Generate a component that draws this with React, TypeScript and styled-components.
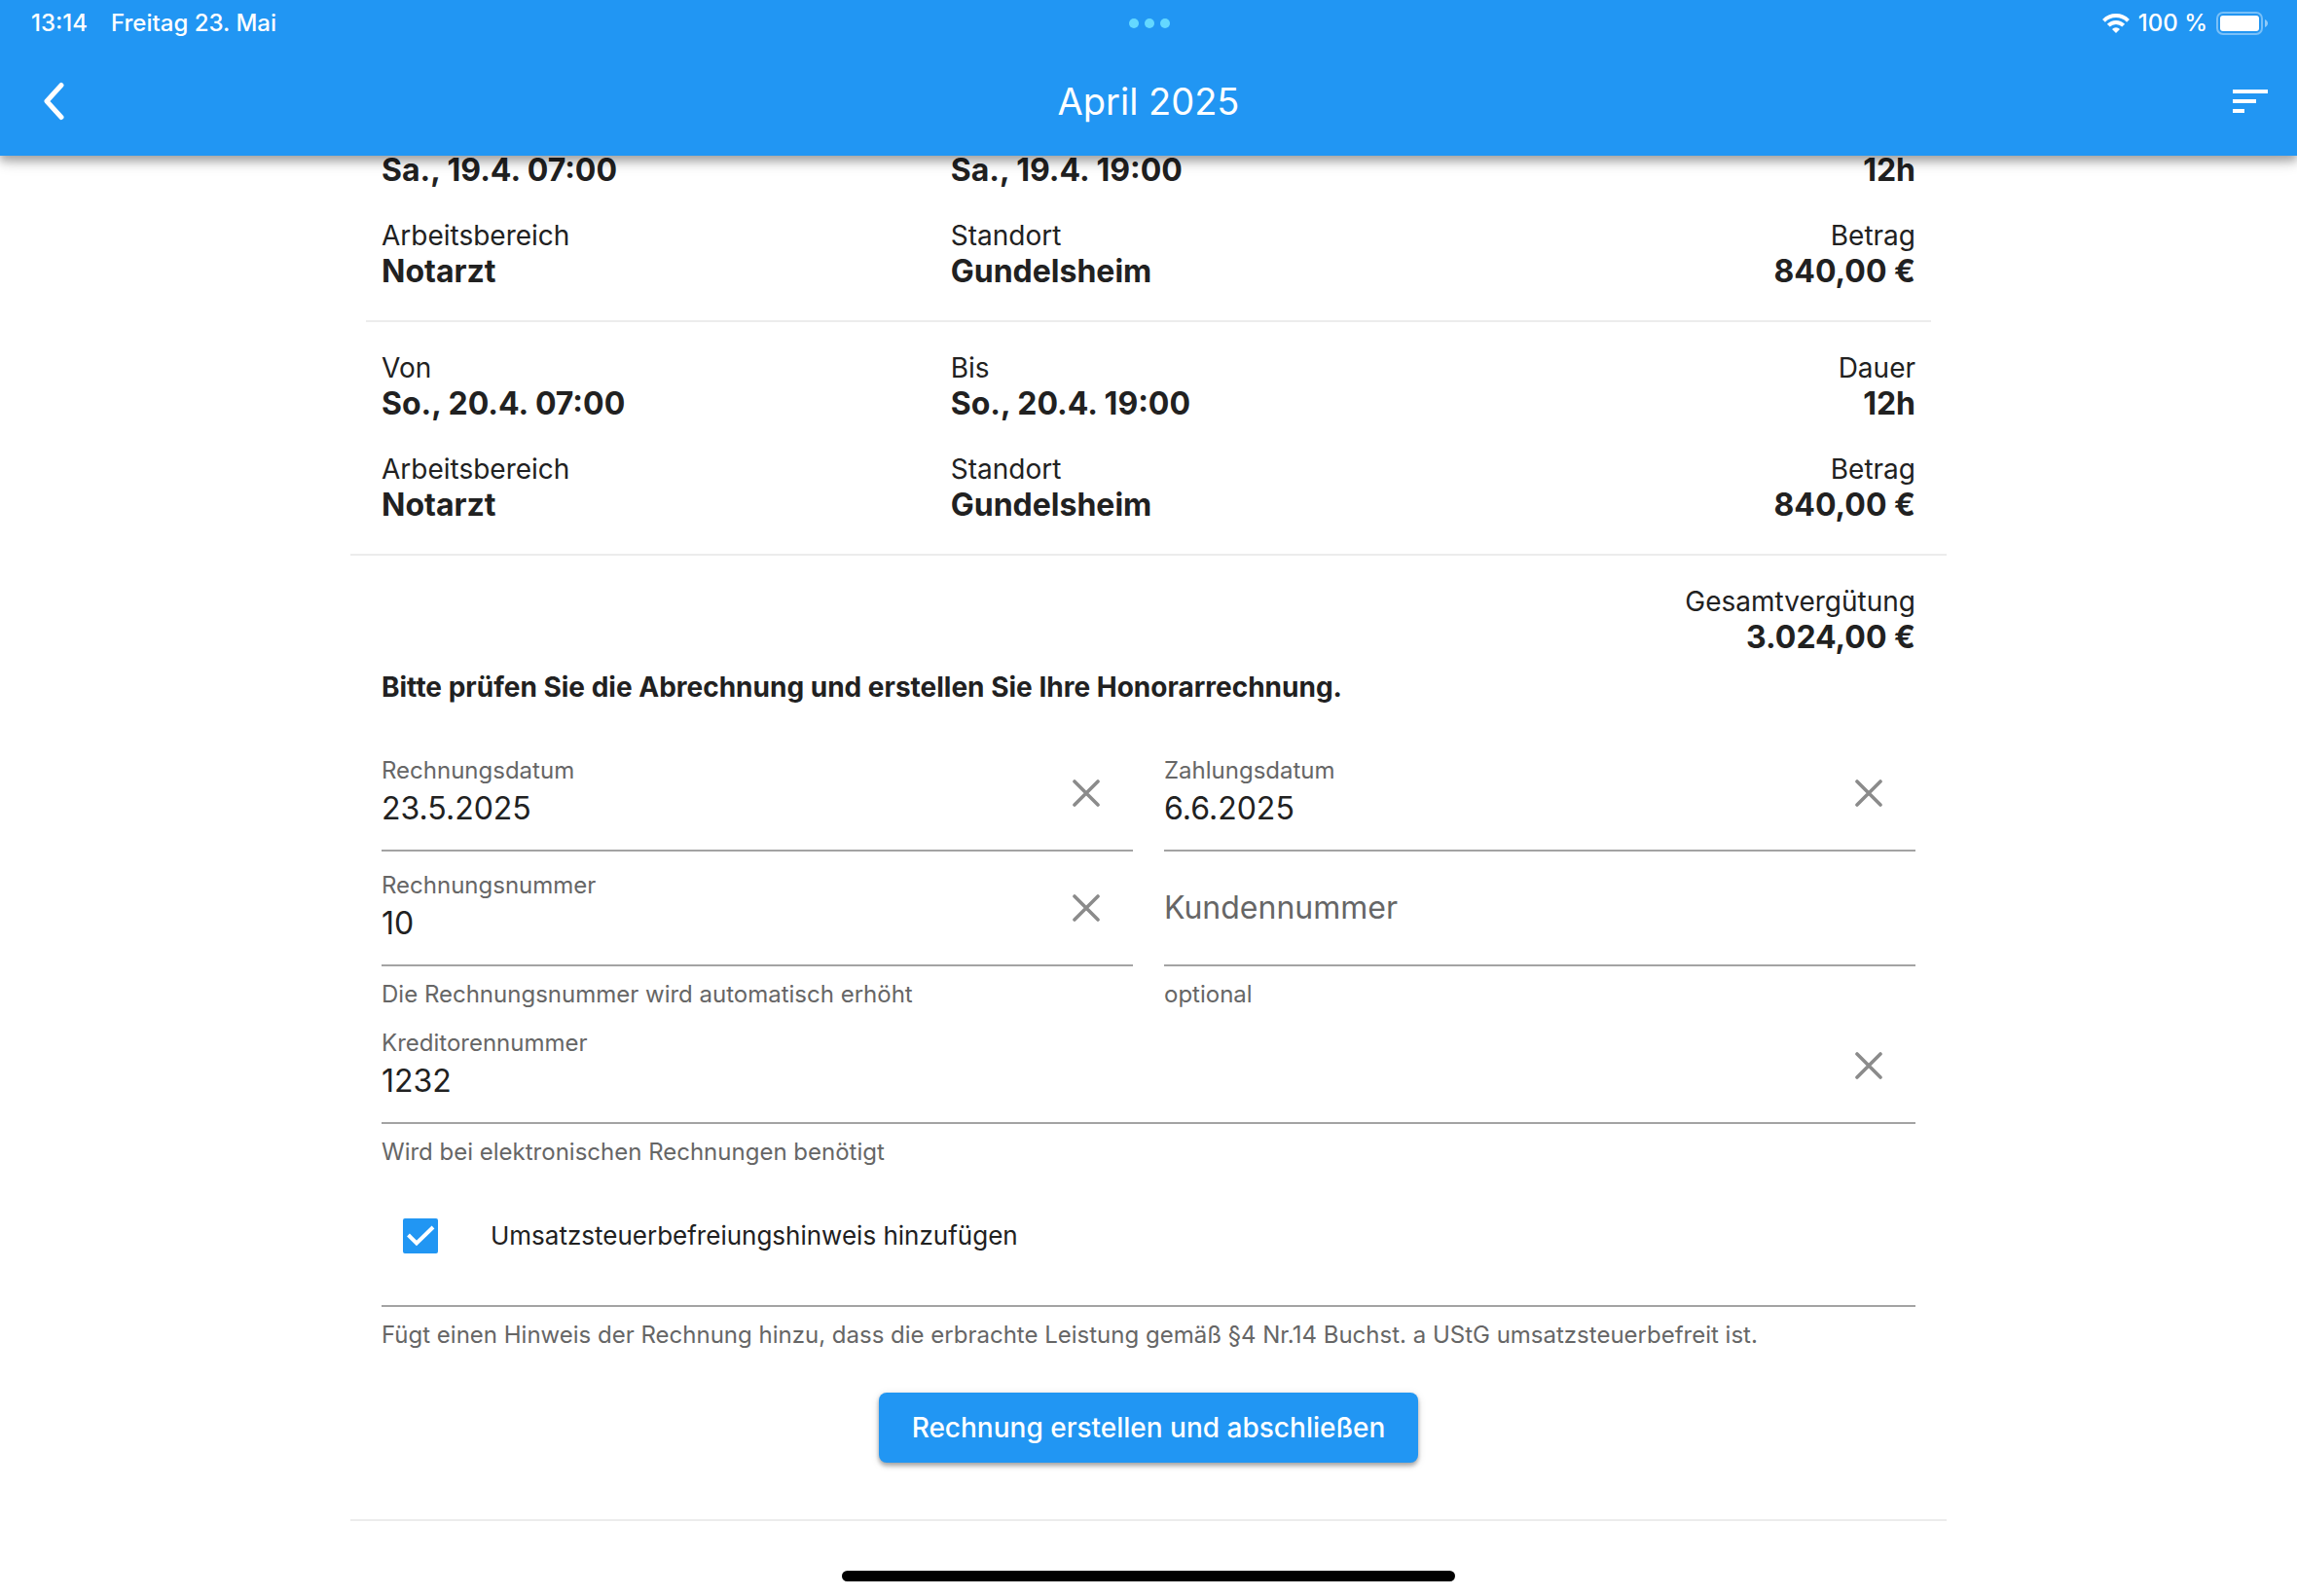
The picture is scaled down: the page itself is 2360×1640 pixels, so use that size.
import React, { useId, useState } from "react";
import styled, { createGlobalStyle } from "styled-components";

const blue = "#2196f3";
const ink = "#212121";
const muted = "#666666";
const hairline = "#ececec";

const GlobalStyle = createGlobalStyle`
  *, *::before, *::after { box-sizing: border-box; }
  html, body { margin: 0; background: #fff; }
  body {
    font-family: Inter, "Liberation Sans", sans-serif;
    color: ${ink};
  }
  button, input { font: inherit; color: inherit; }
`;

const Screen = styled.div`
  display: flex;
  flex-direction: column;
  min-height: 100vh;
`;

const Header = styled.header`
  position: sticky;
  top: 0;
  z-index: 1;
  background: ${blue};
  color: #fff;
  box-shadow: 0 4px 8px rgba(0, 0, 0, 0.2), 0 8px 10px rgba(0, 0, 0, 0.14),
    0 2px 20px rgba(0, 0, 0, 0.12);
`;

const StatusBar = styled.div`
  display: grid;
  grid-template-columns: 1fr auto 1fr;
  align-items: center;
  height: 48px;
  padding: 0 30px 0 32px;
  font-size: 24px;
  line-height: 30px;
  font-weight: 500;
`;

const StatusGroup = styled.div<{ $end?: boolean }>`
  display: flex;
  align-items: center;
  justify-content: ${(p) => (p.$end ? "flex-end" : "flex-start")};
  gap: ${(p) => (p.$end ? 9 : 24)}px;
`;

const Dots = styled.div`
  display: flex;
  gap: 6px;
`;

const Dot = styled.span`
  width: 10px;
  height: 10px;
  border-radius: 50%;
  background: #64d8ff;
`;

const Toolbar = styled.div`
  display: grid;
  grid-template-columns: 1fr auto 1fr;
  align-items: center;
  height: 112px;
`;

const Title = styled.h1`
  margin: 0;
  font-size: 38px;
  line-height: 48px;
  font-weight: 400;
`;

const IconButton = styled.button`
  display: flex;
  align-items: center;
  justify-content: center;
  width: 96px;
  height: 96px;
  padding: 0;
  border: 0;
  background: none;
  color: inherit;
  cursor: pointer;
`;

const BackButton = styled(IconButton)`
  width: 112px;
`;

const SortButton = styled(IconButton)`
  justify-self: end;
`;

const Main = styled.main`
  width: 100%;
  max-width: 1640px;
  margin: -5px auto 0;
`;

const Entry = styled.section`
  margin: 0 16px;
  padding: 30px 0;
  display: grid;
  row-gap: 30px;
  border-bottom: 2px solid ${hairline};

  &:first-of-type {
    padding-top: 0;
  }

  &:last-of-type {
    margin: 0;
    padding-left: 16px;
    padding-right: 16px;
  }
`;

const EntryRow = styled.dl`
  display: grid;
  grid-template-columns: 4fr 4fr 3fr;
  margin: 0;
`;

const Cell = styled.div<{ $end?: boolean }>`
  padding: 0 16px;
  text-align: ${(p) => (p.$end ? "right" : "left")};
`;

const Term = styled.dt`
  font-size: 28px;
  line-height: 34px;
`;

const Value = styled.dd`
  margin: 0;
  font-size: 32px;
  line-height: 40px;
  font-weight: 700;
`;

const Total = styled.dl`
  margin: 0;
  padding: 30px 16px 14px;
`;

const Form = styled.form`
  padding: 0 32px 58px;
  border-bottom: 2px solid ${hairline};
`;

const Prompt = styled.h2`
  margin: 0 0 34px;
  font-size: 28px;
  line-height: 34px;
  font-weight: 700;
`;

const FieldGrid = styled.div`
  display: grid;
  grid-template-columns: 1fr 1fr;
  column-gap: 32px;
`;

const FieldBox = styled.div`
  display: flex;
  align-items: center;
  height: 118px;
  border-bottom: 2px solid #a3a3a3;
`;

const FieldText = styled.div`
  flex: 1;
  min-width: 0;
  display: flex;
  flex-direction: column;
`;

const FieldLabel = styled.label`
  padding-top: 2px;
  font-size: 24px;
  line-height: 30px;
  color: ${muted};
`;

const FieldInput = styled.input`
  width: 100%;
  height: 48px;
  padding: 0;
  border: 0;
  outline: 0;
  background: none;
  font-size: 32px;
  line-height: 48px;

  &::placeholder {
    color: ${muted};
    opacity: 1;
  }
`;

const Helper = styled.p`
  margin: 14px 0 0;
  font-size: 24px;
  line-height: 30px;
  color: ${muted};
`;

const CheckRow = styled.div`
  display: flex;
  align-items: center;
  height: 144px;
  padding-left: 22px;
  border-bottom: 2px solid #a3a3a3;
`;

const CheckLabel = styled.label`
  display: flex;
  align-items: center;
  gap: 54px;
  font-size: 26px;
  line-height: 34px;
  cursor: pointer;
`;

const CheckFrame = styled.span`
  position: relative;
  display: flex;
  width: 36px;
  height: 36px;
`;

const CheckInput = styled.input`
  appearance: none;
  width: 36px;
  height: 36px;
  margin: 0;
  border: 4px solid #757575;
  border-radius: 2px;

  &:checked {
    border-color: ${blue};
    background: ${blue};
  }

  &:not(:checked) + svg {
    display: none;
  }
`;

const CheckMark = styled.svg`
  position: absolute;
  inset: 0;
  pointer-events: none;
`;

const Submit = styled.button`
  display: block;
  height: 72px;
  margin: 44px auto 0;
  padding: 0 34px;
  border: 0;
  border-radius: 8px;
  background: ${blue};
  color: #fff;
  font-size: 28px;
  line-height: 34px;
  font-weight: 500;
  box-shadow: 0 2px 4px rgba(0, 0, 0, 0.2), 0 4px 4px rgba(0, 0, 0, 0.14),
    0 2px 10px rgba(0, 0, 0, 0.12);
  cursor: pointer;
`;

const HomeIndicator = styled.div`
  position: fixed;
  left: 50%;
  bottom: 15px;
  width: 630px;
  height: 11px;
  margin-left: -315px;
  border-radius: 6px;
  background: #000;
`;

const ClearIcon = () => (
  <svg width="28" height="28" viewBox="0 0 28 28" fill="none" stroke="#8b8b8b" strokeWidth="3.6" strokeLinecap="round" aria-hidden="true">
    <path d="M2 2 26 26M26 2 2 26" />
  </svg>
);

const BackIcon = () => (
  <svg width="24" height="40" viewBox="0 0 24 40" fill="none" stroke="#fff" strokeWidth="5" strokeLinecap="round" strokeLinejoin="round" aria-hidden="true">
    <path d="M19 3.5 4 20 19 36.5" />
  </svg>
);

const SortIcon = () => (
  <svg width="36" height="24" viewBox="0 0 36 24" fill="#fff" aria-hidden="true">
    <path d="M0 0h36v4H0zM0 10h24v4H0zM0 20h12v4H0z" />
  </svg>
);

const WifiIcon = () => (
  <svg width="28" height="20" viewBox="0 0 28 20" fill="none" stroke="#fff" strokeWidth="4" aria-hidden="true">
    <path d="M1.5 7.3a17.6 17.6 0 0 1 25 0" />
    <path d="M6.3 12.2a10.8 10.8 0 0 1 15.4 0" />
    <path d="M14 20l-4-4.1a5.6 5.6 0 0 1 8 0z" fill="#fff" stroke="none" />
  </svg>
);

const BatteryIcon = () => (
  <svg width="53" height="24" viewBox="0 0 53 24" aria-hidden="true">
    <rect x="1" y="1" width="46" height="22" rx="6" fill="none" stroke="#fff" strokeOpacity="0.4" strokeWidth="2" />
    <rect x="4" y="4" width="40" height="16" rx="3" fill="#fff" />
    <path d="M50 8c4 1.5 4 6.5 0 8z" fill="#fff" fillOpacity="0.5" />
  </svg>
);

type Item = { term?: string; value: string };

const entries: Item[][][] = [
  [
    [{ value: "Sa., 19.4. 07:00" }, { value: "Sa., 19.4. 19:00" }, { value: "12h" }],
    [
      { term: "Arbeitsbereich", value: "Notarzt" },
      { term: "Standort", value: "Gundelsheim" },
      { term: "Betrag", value: "840,00 €" },
    ],
  ],
  [
    [
      { term: "Von", value: "So., 20.4. 07:00" },
      { term: "Bis", value: "So., 20.4. 19:00" },
      { term: "Dauer", value: "12h" },
    ],
    [
      { term: "Arbeitsbereich", value: "Notarzt" },
      { term: "Standort", value: "Gundelsheim" },
      { term: "Betrag", value: "840,00 €" },
    ],
  ],
];

type FieldProps = { label: string; initial?: string; helper?: string };

function Field({ label, initial = "", helper }: FieldProps) {
  const id = useId();
  const [value, setValue] = useState(initial);
  const filled = value !== "";
  return (
    <div>
      <FieldBox>
        <FieldText>
          {filled && <FieldLabel htmlFor={id}>{label}</FieldLabel>}
          <FieldInput
            id={id}
            aria-label={label}
            placeholder={label}
            value={value}
            onChange={(e) => setValue(e.target.value)}
          />
        </FieldText>
        {filled && (
          <IconButton type="button" aria-label={`${label} löschen`} onClick={() => setValue("")}>
            <ClearIcon />
          </IconButton>
        )}
      </FieldBox>
      {helper && <Helper>{helper}</Helper>}
    </div>
  );
}

export default function App() {
  const [exempt, setExempt] = useState(true);
  return (
    <Screen>
      <GlobalStyle />
      <Header>
        <StatusBar>
          <StatusGroup>
            <span>13:14</span>
            <span>Freitag 23. Mai</span>
          </StatusGroup>
          <Dots>
            <Dot />
            <Dot />
            <Dot />
          </Dots>
          <StatusGroup $end>
            <WifiIcon />
            <span>100 %</span>
            <BatteryIcon />
          </StatusGroup>
        </StatusBar>
        <Toolbar>
          <BackButton type="button" aria-label="Zurück">
            <BackIcon />
          </BackButton>
          <Title>April 2025</Title>
          <SortButton type="button" aria-label="Sortieren">
            <SortIcon />
          </SortButton>
        </Toolbar>
      </Header>

      <Main>
        {entries.map((rows, i) => (
          <Entry key={i}>
            {rows.map((items, r) => (
              <EntryRow key={r}>
                {items.map((item, c) => (
                  <Cell key={c} $end={c === 2}>
                    {item.term && <Term>{item.term}</Term>}
                    <Value>{item.value}</Value>
                  </Cell>
                ))}
              </EntryRow>
            ))}
          </Entry>
        ))}

        <Total>
          <Cell $end>
            <Term>Gesamtvergütung</Term>
            <Value>3.024,00 €</Value>
          </Cell>
        </Total>

        <Form onSubmit={(e) => e.preventDefault()}>
          <Prompt>Bitte prüfen Sie die Abrechnung und erstellen Sie Ihre Honorarrechnung.</Prompt>
          <FieldGrid>
            <Field label="Rechnungsdatum" initial="23.5.2025" />
            <Field label="Zahlungsdatum" initial="6.6.2025" />
            <Field label="Rechnungsnummer" initial="10" helper="Die Rechnungsnummer wird automatisch erhöht" />
            <Field label="Kundennummer" helper="optional" />
          </FieldGrid>
          <Field label="Kreditorennummer" initial="1232" helper="Wird bei elektronischen Rechnungen benötigt" />
          <CheckRow>
            <CheckLabel>
              <CheckFrame>
                <CheckInput type="checkbox" checked={exempt} onChange={(e) => setExempt(e.target.checked)} />
                <CheckMark width="36" height="36" viewBox="0 0 36 36" fill="none" stroke="#fff" strokeWidth="4" aria-hidden="true">
                  <path d="M5.5 17 14 25.5 31 9" />
                </CheckMark>
              </CheckFrame>
              Umsatzsteuerbefreiungshinweis hinzufügen
            </CheckLabel>
          </CheckRow>
          <Helper>
            Fügt einen Hinweis der Rechnung hinzu, dass die erbrachte Leistung gemäß §4 Nr.14 Buchst. a UStG
            umsatzsteuerbefreit ist.
          </Helper>
          <Submit type="submit">Rechnung erstellen und abschließen</Submit>
        </Form>
      </Main>
      <HomeIndicator />
    </Screen>
  );
}
